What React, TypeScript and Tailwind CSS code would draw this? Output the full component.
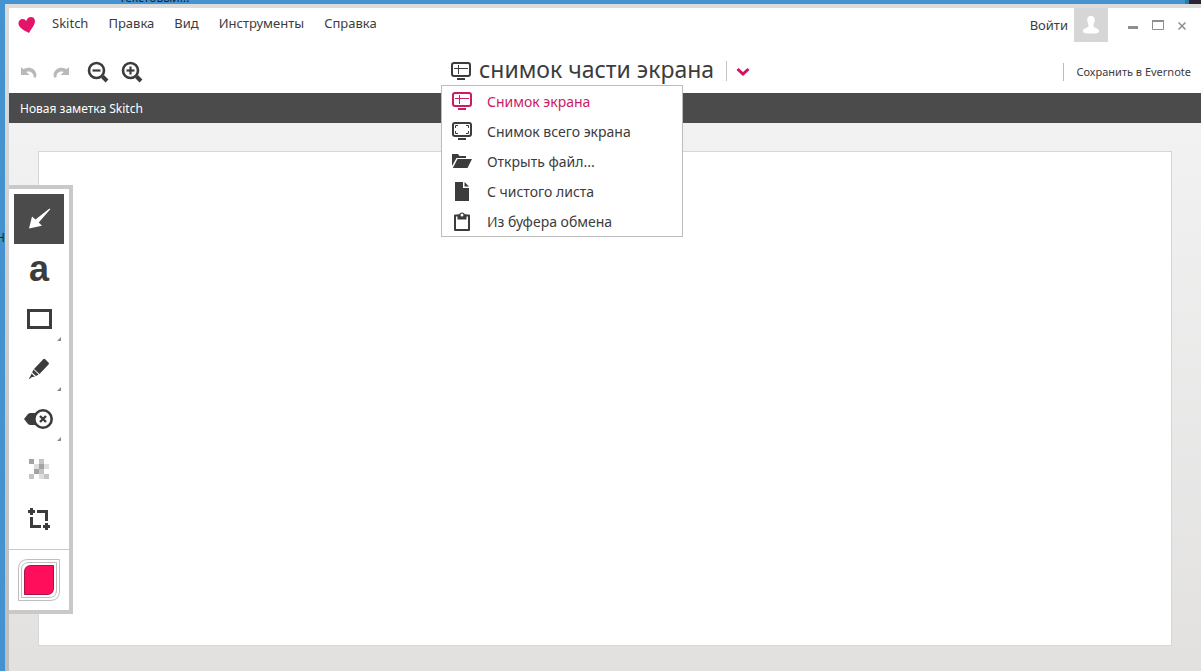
import React, { useState } from 'react';

type IconProps = { className?: string };

function HeartLogo() {
  return (
    <svg width="18" height="18" viewBox="0 0 18 18" aria-hidden="true">
      <path
        d="M11 17C8 15.500 1.500 12.500 .6 8.500C0 5.500 1.800 3 4.600 3C6.200 3 7.400 3.800 8.200 5C9 2.500 11 .8 13.400 1C16.200 1.300 17.500 3.800 16.800 6.800C16 10.300 13 13.500 11 17Z"
        fill="#e5146b"
      />
    </svg>
  );
}

function UndoIcon({ className }: IconProps) {
  return (
    <svg className={className} width="18" height="14" viewBox="0 0 18 14" aria-hidden="true">
      <path
        d="M1 2L3.500 4.300C9 .8 15.500 3.500 16.500 9.500L16 12.500H13.500C14 8.500 10.500 5.500 6.300 7L9.500 10H1Z"
        fill="#b9b9b9"
      />
    </svg>
  );
}

function ZoomIcon({ plus }: { plus?: boolean }) {
  return (
    <svg width="22" height="22" viewBox="0 0 22 22" fill="none" stroke="#3c3c3c" aria-hidden="true">
      <circle cx="9.500" cy="9.500" r="7.500" strokeWidth="2.600" />
      <path d="M15.500 15.500L20 20" strokeWidth="4" />
      <path d="M5.500 9.500H13.500" strokeWidth="2.200" />
      {plus && <path d="M9.500 5.500V13.500" strokeWidth="2.200" />}
    </svg>
  );
}

function ScreenIcon() {
  return (
    <svg width="20" height="20" viewBox="0 0 20 20" fill="none" stroke="currentColor" aria-hidden="true">
      <rect x="1" y="2" width="18" height="13" rx="2" strokeWidth="2" />
      <path d="M3 7.500H17M7.500 4V13" strokeWidth="1" />
      <path d="M6 18H14" strokeWidth="2" />
    </svg>
  );
}

function FullScreenIcon() {
  return (
    <svg width="20" height="20" viewBox="0 0 20 20" fill="none" stroke="currentColor" aria-hidden="true">
      <rect x="1" y="2" width="18" height="13" rx="2" strokeWidth="2" />
      <path d="M3.500 7V4.500H6M14 4.500H16.500V7M16.500 10V12.500H14M6 12.500H3.500V10" strokeWidth="1" />
      <path d="M6 18H14" strokeWidth="2" />
    </svg>
  );
}

function FolderIcon() {
  return (
    <svg width="20" height="20" viewBox="0 0 20 20" fill="currentColor" aria-hidden="true">
      <path d="M0 3H6L7.500 5H14V7H4.500L0 15Z" />
      <path d="M5.500 8H20L15.500 17H.8Z" />
    </svg>
  );
}

function PageIcon() {
  return (
    <svg width="20" height="20" viewBox="0 0 20 20" fill="currentColor" aria-hidden="true">
      <path d="M3 1H11V7H17V20H3Z" />
      <path d="M12.500 1L17 5.500H12.500Z" />
    </svg>
  );
}

function ClipboardIcon() {
  return (
    <svg width="20" height="20" viewBox="0 0 20 20" aria-hidden="true">
      <path d="M3 4.500H17V19H3Z" fill="none" stroke="currentColor" strokeWidth="2" strokeLinejoin="round" />
      <path d="M5.500 3.500H7A3.200 3.200 0 0 1 13 3.500H14.500V8.500H5.500Z" fill="currentColor" />
      <circle cx="10" cy="4" r="1.500" fill="#fff" />
    </svg>
  );
}

function ArrowTool() {
  return (
    <svg width="24" height="24" viewBox="0 0 24 24" fill="#fff" aria-hidden="true">
      <path d="M2 21.500L5 9.500L8.500 12.500L22.500 1.500L23.300 2.300L11.700 15.500L15 18.800Z" />
    </svg>
  );
}

function RectTool() {
  return (
    <svg width="26" height="20" viewBox="0 0 26 20" aria-hidden="true">
      <rect x="2.500" y="1.500" width="22" height="17" fill="none" stroke="#3c3c3c" strokeWidth="3" />
    </svg>
  );
}

function MarkerTool() {
  return (
    <svg width="22" height="22" viewBox="0 0 22 22" fill="#3c3c3c" aria-hidden="true">
      <path d="M15.500 1Q16.500 .5 17.500 1.500L20.500 4.500Q21.500 5.500 20.500 6.500L11.500 16L6 11Z" />
      <path d="M5.400 11.600L10.600 16.600L8 18L4.200 14.500Z" />
      <path d="M3.500 15.500L7 18.700L4 19L1.500 21L1 20.500L2.500 18Z" />
    </svg>
  );
}

function StampTool() {
  return (
    <svg width="30" height="22" viewBox="0 0 30 22" aria-hidden="true">
      <path d="M0 11L4 6Q5 5 6.500 5H13V17H6.500Q5 17 4 16Z" fill="#3c3c3c" />
      <circle cx="19" cy="11" r="8.700" fill="#fff" stroke="#3c3c3c" strokeWidth="2.600" />
      <path d="M16 8L22 14M22 8L16 14" stroke="#3c3c3c" strokeWidth="2.400" />
    </svg>
  );
}

function PixelTool() {
  return (
    <svg width="20" height="20" viewBox="0 0 20 20" shapeRendering="crispEdges" aria-hidden="true">
      <path d="M0 0H5V5H0ZM10 5H15V10H10ZM5 10H10V15H5Z" fill="#a3a3a3" />
      <path d="M10 0H15V5H10ZM0 15H5V20H0ZM15 15H20V20H15ZM10 10H15V15H10Z" fill="#c4c4c4" />
      <path d="M5 5H10V10H5ZM15 5H20V10H15ZM10 15H15V20H10Z" fill="#dedede" />
    </svg>
  );
}

function CropTool() {
  return (
    <svg width="22" height="22" viewBox="0 0 22 22" fill="none" stroke="#3c3c3c" strokeWidth="3" aria-hidden="true">
      <path d="M0 3.500H7M3.500 0V7M9 3.500H18.500V13M3.500 9V18.500H13M15 18.500H22M18.500 15V22" />
    </svg>
  );
}

const menus = ['Skitch', 'Правка', 'Вид', 'Инструменты', 'Справка'];

const captureItems = [
  { title: 'Снимок экрана', icon: <ScreenIcon /> },
  { title: 'Снимок всего экрана', icon: <FullScreenIcon /> },
  { title: 'Открыть файл...', icon: <FolderIcon /> },
  { title: 'С чистого листа', icon: <PageIcon /> },
  { title: 'Из буфера обмена', icon: <ClipboardIcon /> },
];

const tools = [
  { name: 'Стрелка', icon: <ArrowTool />, more: false },
  {
    name: 'Текст',
    icon: <span className="font-['Liberation_Sans',sans-serif] text-4xl leading-8 font-bold">a</span>,
    more: false,
  },
  { name: 'Прямоугольник', icon: <RectTool />, more: true },
  { name: 'Маркер', icon: <MarkerTool />, more: true },
  { name: 'Штамп', icon: <StampTool />, more: true },
  { name: 'Пикселизация', icon: <PixelTool />, more: false },
  { name: 'Обрезка', icon: <CropTool />, more: false },
];

export default function App() {
  const [tool, setTool] = useState(0);
  const [selected, setSelected] = useState(0);

  return (
    <div className="relative flex min-h-screen flex-col bg-[#4492cf] pl-[5px] font-['Noto_Sans',sans-serif] text-[#3c3c3c]">
      {/* Desktop behind the window */}
      <div className="flex h-1 justify-between overflow-hidden">
        <span className="ml-[114px] flex h-1 items-end text-xs leading-3 text-[#10263a]">Текстовый...</span>
        <span className="h-1 w-4 border-l-4 border-[#2e7f96] bg-[#2b2438]" />
      </div>
      <div className="absolute top-[232px] left-0 flex w-[5px] justify-end overflow-hidden text-xs leading-3 text-[#10263a]">
        Н
      </div>

      {/* Window */}
      <div className="flex flex-1 flex-col bg-linear-to-b from-[#dcdcdc] to-[#bdbdbd] pt-1 pl-1">
        <header className="bg-white">
          <div className="flex h-[34px] items-start justify-between">
            <nav className="flex items-start pt-[5px] pl-[9px]">
              <span className="pt-[3px]"><HeartLogo /></span>
              <div className="ml-4 flex gap-5 text-[13px] leading-5">
                {menus.map((m) => (
                  <button key={m} type="button">{m}</button>
                ))}
              </div>
            </nav>
            <div className="flex items-center">
              <button type="button" className="mr-[6px] text-[13px] leading-5">Войти</button>
              <button type="button" aria-label="Профиль" className="flex size-[34px] items-center justify-center bg-[#d6d6d6]">
                <svg width="16" height="18" viewBox="0 0 16 18" fill="#fff" aria-hidden="true">
                  <path d="M8 0C11 0 12 2 11.700 5C11.500 7 10.500 8 10.300 10C11 12 16 12 16 15C16 17.500 13 17.500 8 17.500C3 17.500 0 17.500 0 15C0 12 5 12 5.700 10C5.500 8 4.500 7 4.300 5C4 2 5 0 8 0Z" />
                </svg>
              </button>
              <div className="ml-5 flex items-center gap-[14px] pr-[15px] text-[#8e8e8e]">
                <button type="button" aria-label="Свернуть" className="pt-1">
                  <svg width="10" height="3"><rect width="10" height="3" fill="currentColor" /></svg>
                </button>
                <button type="button" aria-label="Развернуть">
                  <svg width="12" height="10" fill="none" stroke="currentColor">
                    <path d="M.5 .5V9.500H11.500V.5" />
                    <path d="M0 1H12" strokeWidth="2" />
                  </svg>
                </button>
                <button type="button" aria-label="Закрыть" className="pt-[2px]">
                  <svg width="8" height="8" stroke="currentColor" strokeWidth="1.500">
                    <path d="M.5 .5L7.500 7.500M7.500 .5L.5 7.500" />
                  </svg>
                </button>
              </div>
            </div>
          </div>

          <div className="grid h-[51px] grid-cols-[1fr_auto_1fr] items-center pt-[9px] pr-[10px] pl-[11px]">
            <div className="flex items-center">
              <button type="button" aria-label="Отменить"><UndoIcon /></button>
              <button type="button" aria-label="Повторить" className="ml-[14px]"><UndoIcon className="-scale-x-100" /></button>
              <button type="button" aria-label="Уменьшить" className="ml-[17px]"><ZoomIcon /></button>
              <button type="button" aria-label="Увеличить" className="ml-3"><ZoomIcon plus /></button>
            </div>

            <div className="relative pr-5 pb-[2px] pl-[10px]">
              <div className="flex h-7 items-center">
                <button type="button" className="flex items-center gap-2 text-[23px] leading-7 whitespace-nowrap">
                  <ScreenIcon />
                  <span className="pb-1">снимок части экрана</span>
                </button>
                <button type="button" aria-label="Выбрать режим" className="ml-3 flex h-5 items-center border-l border-[#c4c4c4] pl-[9px]">
                  <svg width="14" height="10" viewBox="0 0 14 10" fill="none" aria-hidden="true">
                    <path d="M1.500 3L7 8L12.500 3" stroke="#d6125f" strokeWidth="3" />
                  </svg>
                </button>
              </div>
              <ul className="absolute top-7 left-0 z-20 w-[242px] border border-[#bcbcbc] bg-white">
                {captureItems.map((item, i) => (
                  <li key={item.title}>
                    <button
                      type="button"
                      onClick={() => setSelected(i)}
                      className={`flex h-[30px] w-full items-center gap-[15px] pl-[10px] text-sm ${i === selected ? 'text-[#cb1b67]' : ''}`}
                    >
                      {item.icon}
                      <span className="pt-[2px]">{item.title}</span>
                    </button>
                  </li>
                ))}
              </ul>
            </div>

            <div className="flex justify-end">
              <button type="button" className="border-l border-[#bcbcbc] pl-[13px] text-[11px] leading-[18px]">Сохранить в Evernote</button>
            </div>
          </div>
        </header>

        <h1 className="h-[30px] bg-[#4b4b4b] pl-[11px] text-xs leading-8 text-white">Новая заметка Skitch</h1>

        {/* Canvas */}
        <main className="relative flex flex-1 flex-col bg-linear-to-b from-[#f2f2f2] to-[#e2e1e0] px-[29px] pt-7 pb-[25px]">
          <div className="flex-1 border border-[#d6d6d6] bg-white" />

          <aside className="absolute top-[62px] left-0 w-16 border-y-4 border-r-4 border-[#c9c9c9] bg-white">
            <div className="p-[5px]">
              {tools.map((t, i) => (
                <button
                  key={t.name}
                  type="button"
                  aria-label={t.name}
                  onClick={() => setTool(i)}
                  className={`relative flex size-[50px] items-center justify-center ${i === tool ? 'bg-[#4b4b4b]' : ''}`}
                >
                  {t.icon}
                  {t.more && (
                    <svg className="absolute right-[3px] bottom-[3px]" width="4" height="4" aria-hidden="true">
                      <path d="M4 0V4H0Z" fill="#8a8a8a" />
                    </svg>
                  )}
                </button>
              ))}
            </div>
            <div className="flex justify-center border-t border-[#c9c9c9] py-[9px]">
              <button type="button" aria-label="Цвет">
                <svg width="42" height="42" viewBox="0 0 42 42" fill="none" aria-hidden="true">
                  <path d="M10 .5H41.500V32Q41.500 41.500 32 41.500H.5V10Q.5 .5 10 .5Z" stroke="#bdbdbd" />
                  <path d="M11 3.500H38.500V31Q38.500 38.500 31 38.500H3.500V11Q3.500 3.500 11 3.500Z" stroke="#bdbdbd" />
                  <path d="M13 6.500H35.500V29Q35.500 35.500 29 35.500H6.500V13Q6.500 6.500 13 6.500Z" fill="#ff0f5b" stroke="#a8144a" />
                </svg>
              </button>
            </div>
          </aside>
        </main>
      </div>
    </div>
  );
}
